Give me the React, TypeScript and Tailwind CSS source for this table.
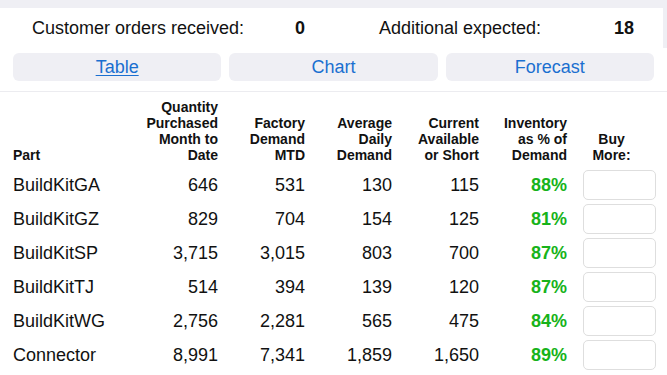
export default function App() {
  type Row = {
    part: string;
    qty: string;
    factory: string;
    avg: string;
    current: string;
    pct: string;
  };

  const rows: Row[] = [
    { part: "BuildKitGA", qty: "646", factory: "531", avg: "130", current: "115", pct: "88%" },
    { part: "BuildKitGZ", qty: "829", factory: "704", avg: "154", current: "125", pct: "81%" },
    { part: "BuildKitSP", qty: "3,715", factory: "3,015", avg: "803", current: "700", pct: "87%" },
    { part: "BuildKitTJ", qty: "514", factory: "394", avg: "139", current: "120", pct: "87%" },
    { part: "BuildKitWG", qty: "2,756", factory: "2,281", avg: "565", current: "475", pct: "84%" },
    { part: "Connector", qty: "8,991", factory: "7,341", avg: "1,859", current: "1,650", pct: "89%" },
  ];

  const cols = "grid grid-cols-[122px_83px_87px_87px_87px_88px_73px] gap-x-0 px-[13px]";

  return (
    <div className="w-[667px] h-[375px] overflow-hidden bg-[#efeff4] pt-[8px] font-['Liberation_Sans',Arial,sans-serif] text-[#111]">
      {/* Summary */}
      <div className="flex items-center h-[40px] w-[663px] bg-white text-[18px]">
        <span className="pl-[32px] w-[280px]">Customer orders received:</span>
        <span className="w-[40px] text-center font-bold">0</span>
        <span className="ml-[59px] w-[220px]">Additional expected:</span>
        <span className="w-[35px] text-right font-bold">18</span>
      </div>

      {/* Tabs */}
      <div className="bg-white grid grid-cols-3 gap-[8px] px-[13px] pt-[5px] pb-[10px] border-b border-[#ececf0]">
        <button className="h-[28px] rounded-[6px] bg-[#efeff4] text-[18px] text-[#1a6fd0] underline underline-offset-2">
          Table
        </button>
        <button className="h-[28px] rounded-[6px] bg-[#efeff4] text-[18px] text-[#1a6fd0]">
          Chart
        </button>
        <button className="h-[28px] rounded-[6px] bg-[#efeff4] text-[18px] text-[#1a6fd0]">
          Forecast
        </button>
      </div>

      {/* Table */}
      <div className="bg-white h-[300px]">
        <div className={`${cols} items-end pt-[7px] pb-[5px] text-[14px] leading-[16px] font-bold`}>
          <div>Part</div>
          <div className="text-right">Quantity<br />Purchased<br />Month to<br />Date</div>
          <div className="text-right">Factory<br />Demand<br />MTD</div>
          <div className="text-right">Average<br />Daily<br />Demand</div>
          <div className="text-right">Current<br />Available<br />or Short</div>
          <div className="text-right">Inventory<br />as % of<br />Demand</div>
          <div className="text-center pl-[16px]">Buy<br />More:</div>
        </div>
        {rows.map((r) => (
          <div key={r.part} className={`${cols} items-center h-[34px] text-[18px]`}>
            <div>{r.part}</div>
            <div className="text-right">{r.qty}</div>
            <div className="text-right">{r.factory}</div>
            <div className="text-right">{r.avg}</div>
            <div className="text-right">{r.current}</div>
            <div className="text-right font-bold text-[#17b31a]">{r.pct}</div>
            <div className="pl-[16px]">
              <input className="block w-[73px] h-[30px] rounded-[5px] border border-[#dedede] bg-white" />
            </div>
          </div>
        ))}
      </div>
    </div>
  );
}
